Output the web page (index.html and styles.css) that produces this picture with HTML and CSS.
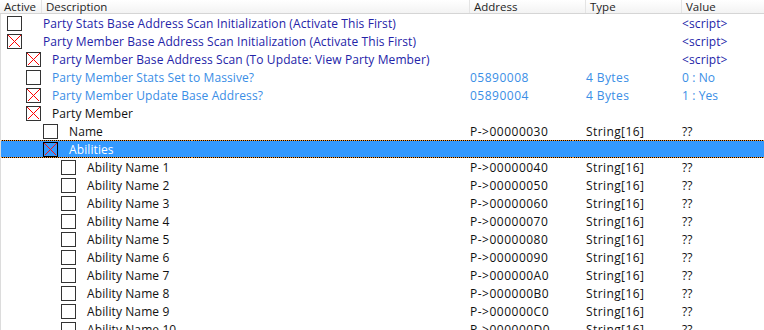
FILE: index.html
```html
<!DOCTYPE html>
<html lang="en">
<head>
    <meta charset="UTF-8">
    <title>Cheat Table</title>
    <link rel="stylesheet" href="styles.css">
</head>
<body>
    <div class="table">
        <div class="head">
            <div class="hcell c-active">Active</div>
            <div class="hcell c-desc">Description</div>
            <div class="hcell c-addr">Address</div>
            <div class="hcell c-type">Type</div>
            <div class="hcell c-val">Value</div>
        </div>
        <div class="rows" id="rows"></div>
    </div>
    <script>
        const entries = [
            { lv: 0, on: false, kind: 'script', desc: 'Party Stats Base Address Scan Initialization (Activate This First)', val: '<script>' },
            { lv: 0, on: true, kind: 'script', desc: 'Party Member Base Address Scan Initialization (Activate This First)', val: '<script>' },
            { lv: 1, on: true, kind: 'script', desc: 'Party Member Base Address Scan (To Update: View Party Member)', val: '<script>' },
            { lv: 1, on: false, kind: 'light', desc: 'Party Member Stats Set to Massive?', addr: '05890008', type: '4 Bytes', val: '0 : No' },
            { lv: 1, on: true, kind: 'light', desc: 'Party Member Update Base Address?', addr: '05890004', type: '4 Bytes', val: '1 : Yes' },
            { lv: 1, on: true, kind: 'plain', desc: 'Party Member' },
            { lv: 2, on: false, kind: 'plain', desc: 'Name', addr: 'P->00000030', type: 'String[16]', val: '??' },
            { lv: 2, on: true, kind: 'plain', desc: 'Abilities', sel: true }
        ];
        const offsets = ['40', '50', '60', '70', '80', '90', 'A0', 'B0', 'C0', 'D0'];
        offsets.forEach((o, i) => {
            entries.push({ lv: 3, on: false, kind: 'plain', desc: 'Ability Name ' + (i + 1), addr: 'P->000000' + o, type: 'String[16]', val: '??' });
        });

        const box = on => '<svg class="chk" width="15" height="15" viewBox="0 0 15 15" shape-rendering="crispEdges">'
            + '<rect x="0.5" y="0.5" width="14" height="14" class="chk-box"/>'
            + (on ? '<path d="M1.5 1.5 L13.5 13.5 M13.5 1.5 L1.5 13.5" class="chk-x"/>' : '')
            + '</svg>';

        const esc = s => (s || '').replace(/</g, '&lt;').replace(/>/g, '&gt;');

        document.getElementById('rows').innerHTML = entries.map(e => `
            <div class="row ${e.kind}${e.sel ? ' sel' : ''}">
                <div class="cell c-tree lv${e.lv}">${box(e.on)}<span class="desc">${esc(e.desc)}</span></div>
                <div class="cell c-addr">${esc(e.addr)}</div>
                <div class="cell c-type">${esc(e.type)}</div>
                <div class="cell c-val">${esc(e.val)}</div>
            </div>`).join('');
    </script>
</body>
</html>
```

FILE: styles.css
```css
* { margin: 0; padding: 0; box-sizing: border-box; }
body {
    font-family: "Open Sans", "Liberation Sans", sans-serif;
    font-size: 12px;
    letter-spacing: 0.1px;
    color: #111;
    background: #fff;
    overflow: hidden;
}
.table { width: 764px; }

.head {
    display: grid;
    grid-template-columns: 41px 428px 116px 96px 1fr;
    height: 14px;
    background: linear-gradient(#fff, #f3f3f3);
    border-bottom: 1px solid #d5d5d5;
    font-size: 11.5px;
    letter-spacing: 0;
}
.hcell {
    line-height: 13px;
    padding-left: 4px;
    border-left: 1px solid #e4e4e4;
    color: #1e1e1e;
    white-space: nowrap;
}
.hcell.c-active { border-left: none; padding-left: 4px; }

.rows { border-left: 1px solid #dcdcdc; }
.row {
    display: grid;
    grid-template-columns: 468px 116px 96px 1fr;
    height: 18px;
    align-items: center;
    white-space: nowrap;
}
.cell { padding-left: 1px; }
.row .c-addr { letter-spacing: 0.5px; }
.row .c-type { letter-spacing: 0.4px; }
.c-tree { display: flex; align-items: center; letter-spacing: 0.1px; }
.chk { display: block; flex: none; }
.chk-box { fill: #fff; stroke: #333; }
.chk-x { stroke: #f00; stroke-width: 1; fill: none; }

.lv0 { padding-left: 6px; }
.lv0 .desc { margin-left: 21px; }
.lv1 { padding-left: 25px; }
.lv1 .desc { margin-left: 11px; }
.lv2 { padding-left: 42px; }
.lv2 .desc { margin-left: 11px; }
.lv3 { padding-left: 60px; }
.lv3 .desc { margin-left: 11px; }

.row.script { color: #2424a8; }
.row.light { color: #3a8ee6; }

.row.sel {
    background: #3399ff;
    color: #fff;
    border-style: solid;
    border-width: 1px 0;
    border-image: repeating-linear-gradient(90deg, #000 0 1px, #ff9a30 1px 2px) 1;
}
.row.sel .chk-box { fill: none; stroke: #000; }
.row.sel .chk-x { stroke: #ff1010; }
```
